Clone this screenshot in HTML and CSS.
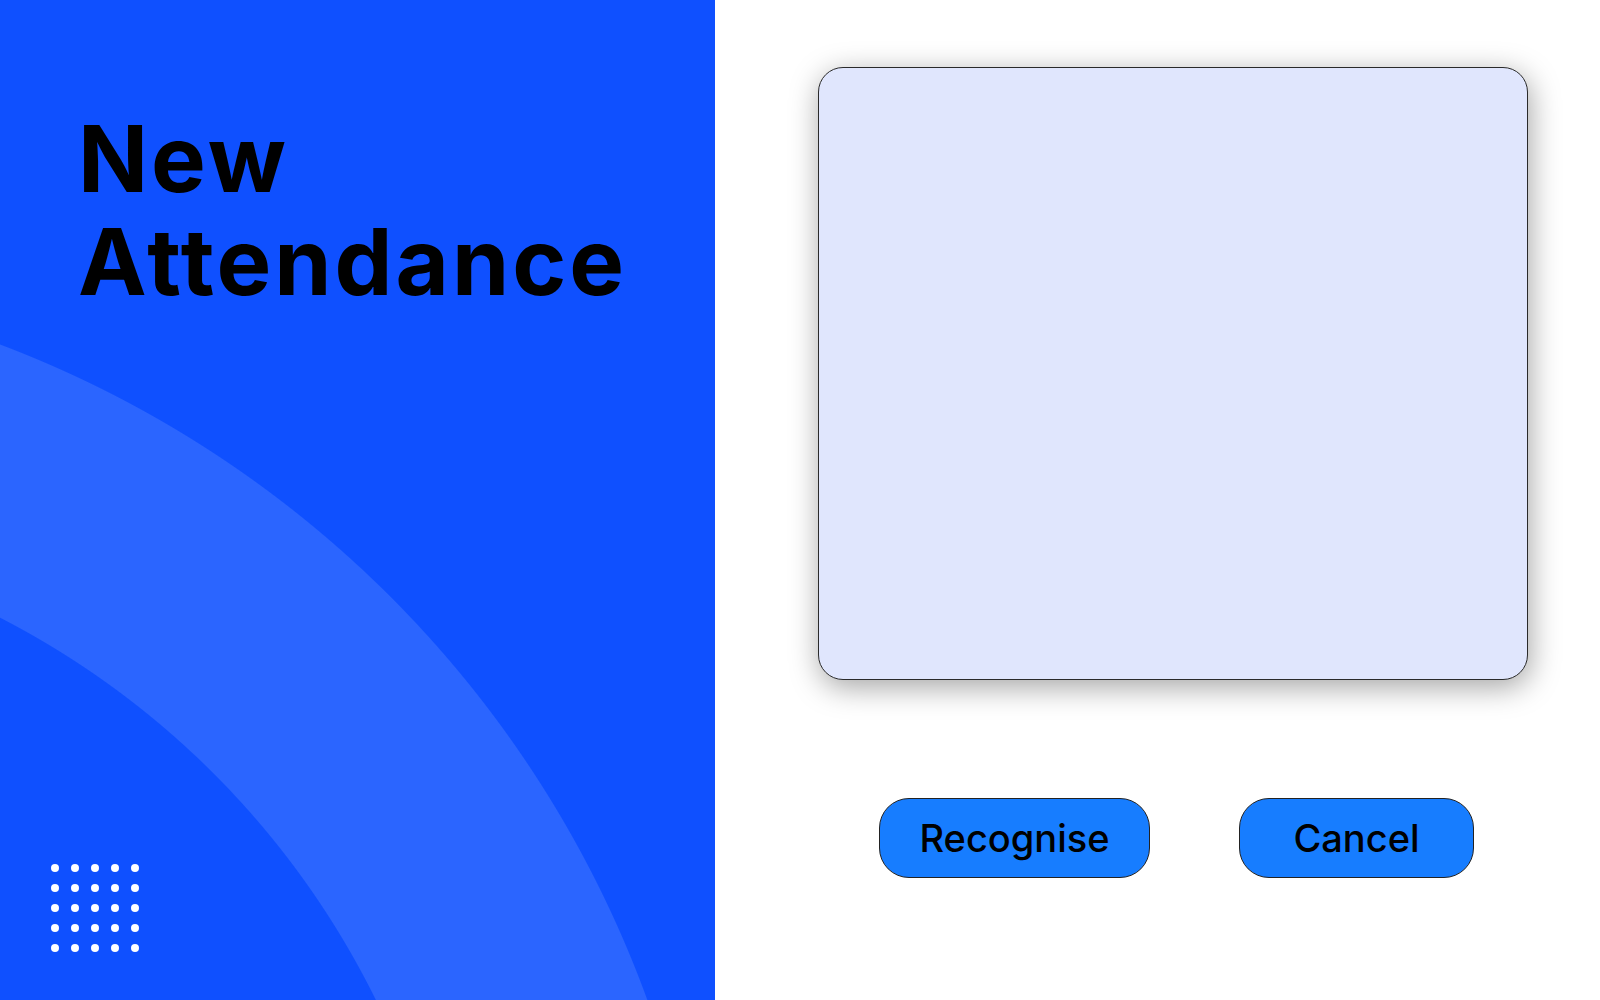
FILE: index.html
```html
<!DOCTYPE html>
<html lang="en">
<head>
<meta charset="utf-8">
<title>New Attendance</title>
<link rel="stylesheet" href="styles.css">
</head>
<body>
<main class="screen">
  <section class="brand">
    <h1 class="title">New<br>Attendance</h1>
    <div class="dots">
      <span class="dot"></span><span class="dot"></span><span class="dot"></span><span class="dot"></span><span class="dot"></span>
      <span class="dot"></span><span class="dot"></span><span class="dot"></span><span class="dot"></span><span class="dot"></span>
      <span class="dot"></span><span class="dot"></span><span class="dot"></span><span class="dot"></span><span class="dot"></span>
      <span class="dot"></span><span class="dot"></span><span class="dot"></span><span class="dot"></span><span class="dot"></span>
      <span class="dot"></span><span class="dot"></span><span class="dot"></span><span class="dot"></span><span class="dot"></span>
    </div>
  </section>
  <section class="capture">
    <div class="preview"></div>
    <div class="actions">
      <button class="btn btn-recognise" type="button">Recognise</button>
      <button class="btn btn-cancel" type="button">Cancel</button>
    </div>
  </section>
</main>
</body>
</html>
```

FILE: styles.css
```css
html, body {
  margin: 0;
  padding: 0;
  background: #ffffff;
}

body {
  font-family: Inter, "Liberation Sans", Arial, sans-serif;
}

.screen {
  display: flex;
  width: 1600px;
  height: 1000px;
  overflow: hidden;
}

.brand {
  flex: none;
  width: 715px;
  height: 1000px;
  box-sizing: border-box;
  padding: 107px 0 48px 51px;
  display: flex;
  flex-direction: column;
  justify-content: space-between;
  background:
    radial-gradient(circle at -391px 1378px,
      transparent 854.5px,
      #2b65ff 855.5px,
      #2b65ff 1104.5px,
      transparent 1105.5px),
    #0f50ff;
}

.title {
  margin: 0 0 0 27px;
  font-size: 92px;
  line-height: 103px;
  font-weight: 700;
  color: #000000;
  letter-spacing: 3px;
}

.dots {
  display: grid;
  grid-template-columns: repeat(5, 8px);
  grid-auto-rows: 8px;
  gap: 12px;
}

.dot {
  width: 8px;
  height: 8px;
  border-radius: 50%;
  background: #ffffff;
}

.capture {
  flex: 1;
  box-sizing: border-box;
  padding: 67px 0 0 103px;
  display: flex;
  flex-direction: column;
}

.preview {
  width: 710px;
  height: 613px;
  box-sizing: border-box;
  background: #e0e6fd;
  border: 1px solid #2a2a2a;
  border-radius: 25px;
  box-shadow: 2px 7px 30px rgba(0, 0, 0, 0.36);
}

.actions {
  display: flex;
  gap: 89px;
  margin-top: 118px;
  padding-left: 61px;
}

.btn {
  height: 80px;
  box-sizing: border-box;
  padding: 0;
  border: 1px solid #222222;
  border-radius: 30px;
  background: #177dff;
  color: #000000;
  font-family: Inter, "Liberation Sans", Arial, sans-serif;
  font-size: 38px;
  font-weight: 500;
  cursor: pointer;
}

.btn-recognise {
  width: 271px;
}

.btn-cancel {
  width: 235px;
}
```
